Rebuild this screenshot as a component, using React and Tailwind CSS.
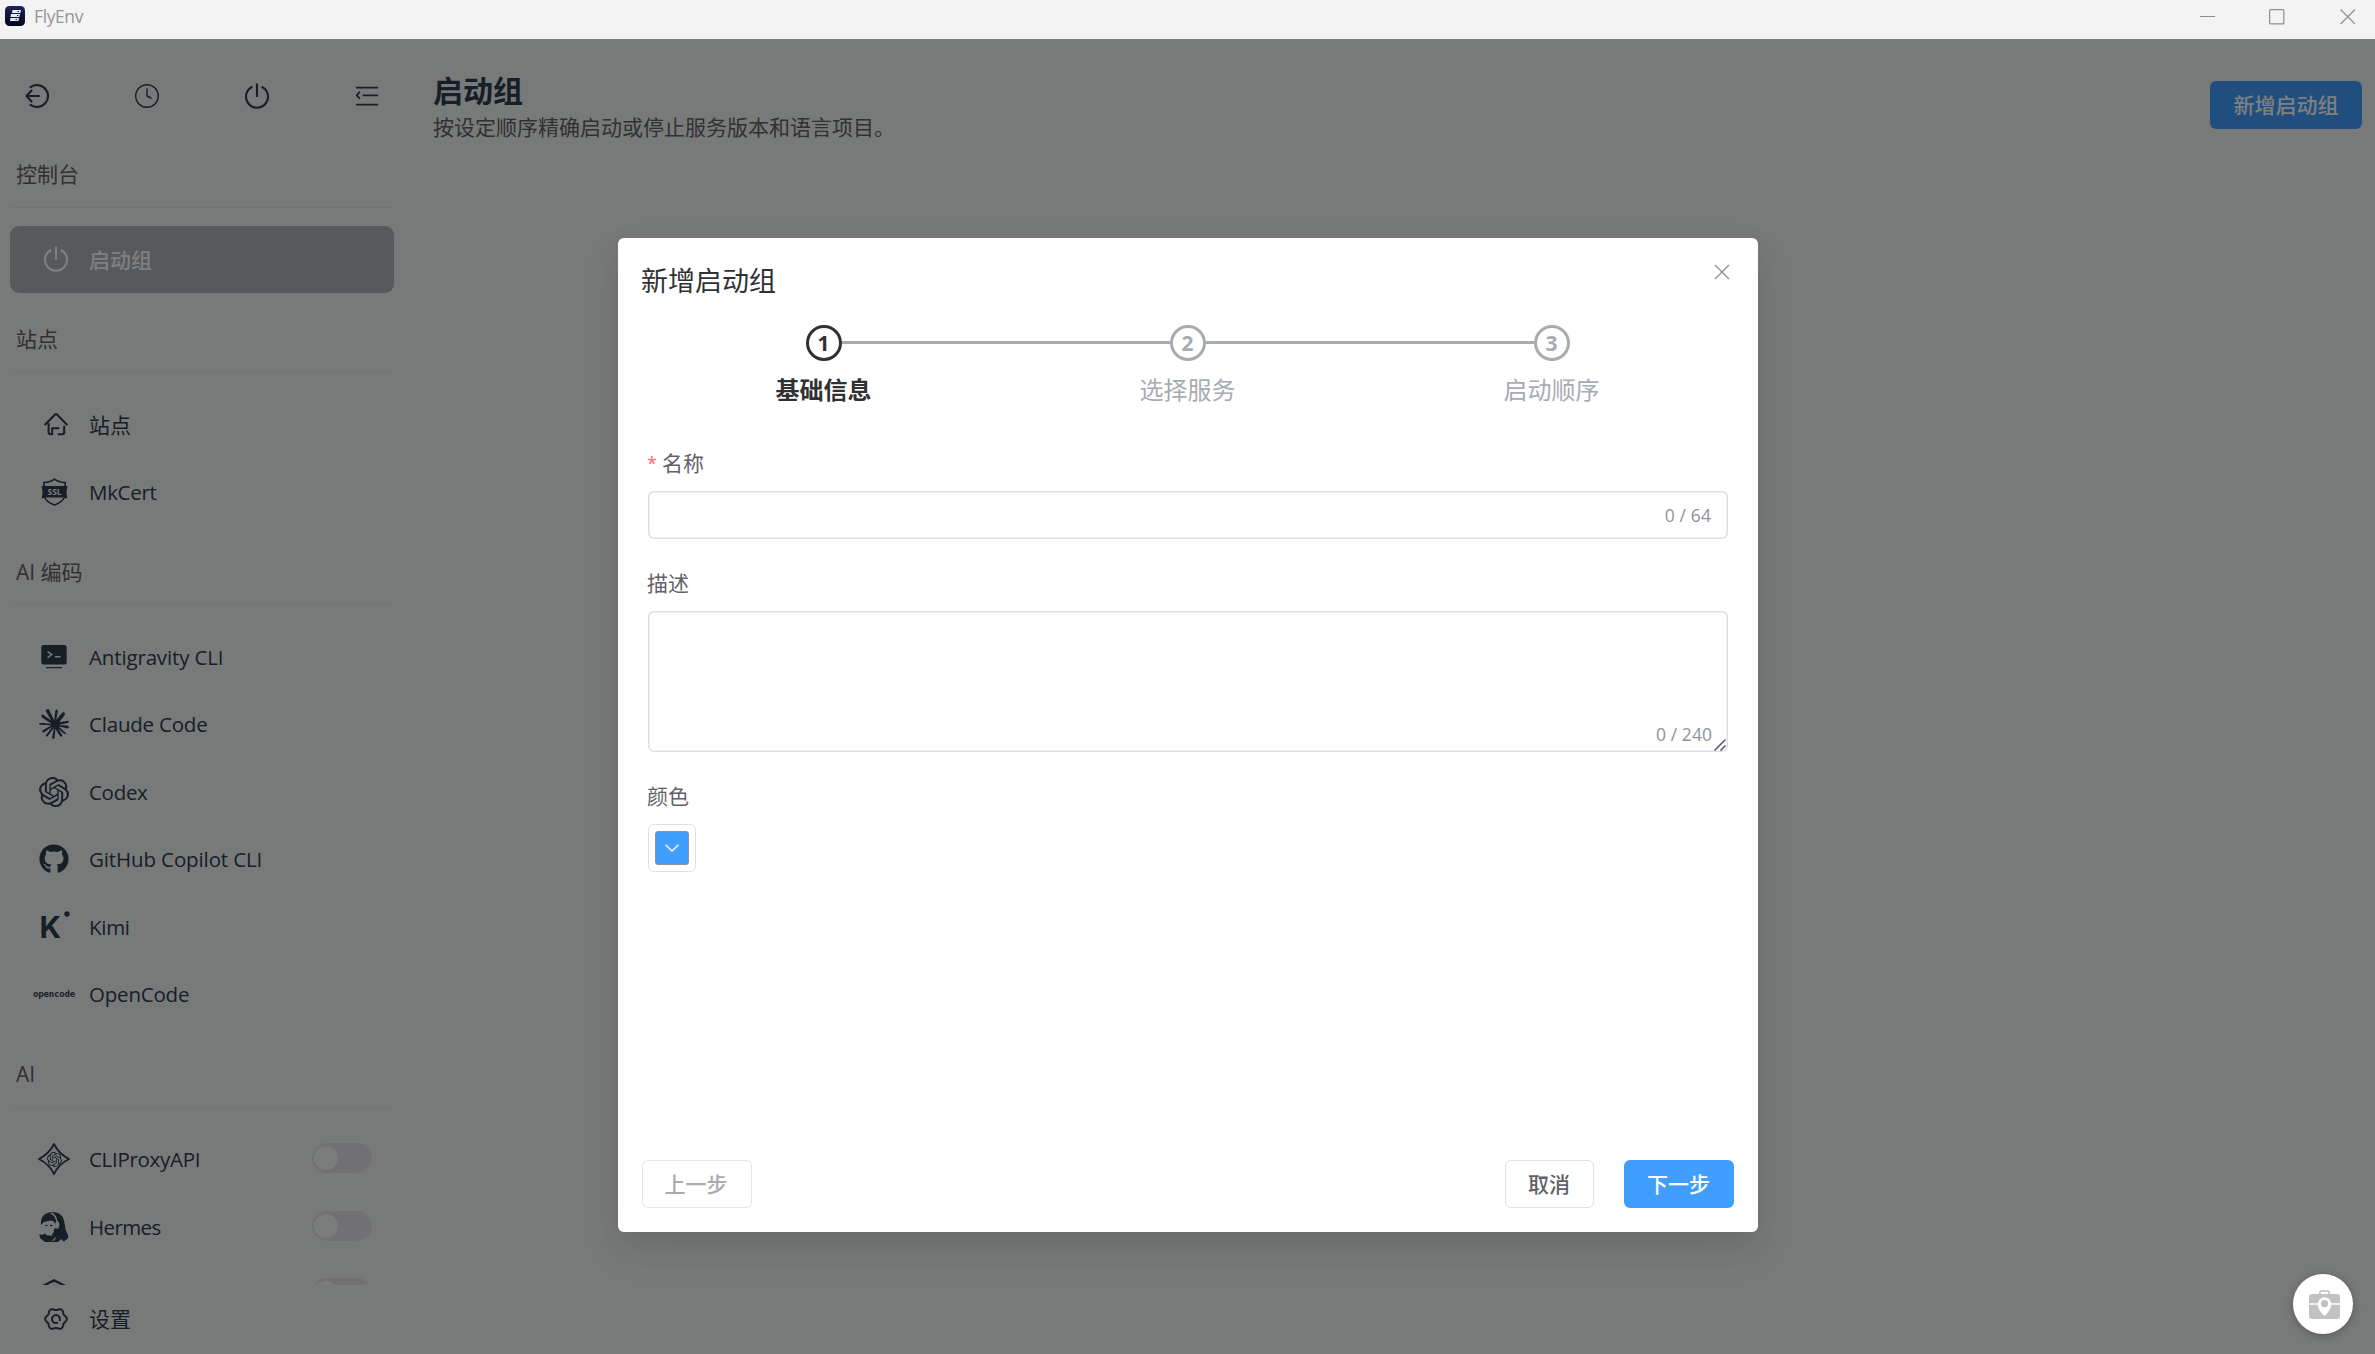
import React from "react";
import { SiClaude, SiOpenai } from "react-icons/si";
import { FaGithub } from "react-icons/fa";

const stroke = {
  fill: "none",
  stroke: "currentColor",
  strokeLinecap: "round",
  strokeLinejoin: "round",
};

function ExitIcon() {
  return (
    <svg width="24" height="24" viewBox="0 0 24 24" {...stroke} strokeWidth="2.2" className="overflow-visible">
      <path d="M5.6 3.1A11 11 0 1 1 5.6 20.9M1.4 12H14M6.6 6.6L1.4 12l5.2 5.4" />
    </svg>
  );
}

function ClockIcon() {
  return (
    <svg width="24" height="24" viewBox="0 0 24 24" {...stroke} strokeWidth="1.4">
      <circle cx="12" cy="12" r="11.3" />
      <path d="M12 5v7l4 2" />
    </svg>
  );
}

function PowerIcon() {
  return (
    <svg width="24" height="26" viewBox="0 0 24 26" {...stroke} strokeWidth="2.1">
      <path d="M16.6 3.7A11 11 0 1 1 7.4 3.7M12 .4V14" strokeLinecap="butt" />
    </svg>
  );
}

function FoldIcon() {
  return (
    <svg width="24" height="24" viewBox="0 0 24 24" {...stroke} strokeWidth="1.7">
      <path d="M1.6 3.6H22.4M8.3 11.4H22.4M1.6 20.6H22.4M4.4 8.2L1.8 11.4l2.6 3" />
    </svg>
  );
}

function HomeIcon() {
  return (
    <svg width="24" height="24" viewBox="0 0 24 24" {...stroke} strokeWidth="2.1">
      <path d="M1.2 12.4L11 2.6q1-1 2 0l9.8 9.8M4.6 12v8.2q0 2 2 2h1.6v-6H14.5M20.2 14.5v5.7q0 2-2 2H14.6" />
    </svg>
  );
}

function SslIcon() {
  return (
    <svg width="27" height="28" viewBox="0 0 27 28" fill="currentColor">
      <path
        d="M2.9 9V4.6Q9.5 4.4 13.5 1.2Q17.5 4.4 24.1 4.6V9M2.9 18Q5.5 24.4 13.5 27Q21.5 24.4 24.1 18"
        fill="none"
        stroke="currentColor"
        strokeWidth="1.6"
      />
      <path d="M.6 8h25.8l-1 6.4 1 6.4-3.6-1.2H4.2L.6 20.8l1-6.4z" />
      <text x="13.5" y="16.8" textAnchor="middle" fontSize="8.4" fontWeight="700" fill="#f0f4f2" fontFamily="Open Sans, sans-serif">
        SSL
      </text>
    </svg>
  );
}

function TerminalIcon() {
  return (
    <svg width="26" height="24" viewBox="0 0 26 24" fill="currentColor">
      <rect x="0.3" y="0" width="25.4" height="19.6" rx="2.6" />
      <path d="M6.6 6.6l4.2 3-4.2 3M14 11.7h5.6" fill="none" stroke="#f0f4f2" strokeWidth="1.4" />
      <path d="M5 22.6h16" stroke="currentColor" strokeWidth="1.2" />
    </svg>
  );
}

function KimiIcon() {
  return (
    <svg width="30" height="30" viewBox="0 0 30 30" fill="currentColor" className="mb-1 overflow-visible">
      <text x="0.6" y="28" fontSize="30" fontWeight="700" fontFamily="Inter, sans-serif">
        K
      </text>
      <circle cx="28" cy="4" r="2.7" />
    </svg>
  );
}

function OpenCodeMark() {
  return (
    <span className="whitespace-nowrap text-[9px] leading-none font-bold tracking-[-0.16px] font-['DejaVu_Sans_Mono',monospace]">
      opencode
    </span>
  );
}

function ProxyIcon() {
  return (
    <span className="relative flex size-8 items-center justify-center">
      <svg width="32" height="32" viewBox="0 0 32 32" {...stroke} strokeWidth="1.8" className="absolute inset-0">
        <path d="M16 1Q20.5 10.5 31 16Q20.5 21.5 16 31Q11.5 21.5 1 16Q11.5 10.5 16 1z" />
      </svg>
      <SiOpenai size={15} />
    </span>
  );
}

function HermesIcon() {
  return (
    <svg width="30" height="30" viewBox="0 0 30 30" fill="currentColor">
      <path d="M2 13Q1 1 13 0Q24 0 25.5 11Q26 18 29 23Q30 27 26.5 28L25 30L22.5 27L19 30H6L1 26L.4 22L3 23L6 21.5L12.5 24L13.5 18L17 16L15 9.5L12 8.6L5 10z" />
      <path d="M5.5 12L8 9.8l.6 2L10.5 9.6l.8 2.6L13.4 10l1.4 3.2V20l-2.2 3.2H7.2L5.2 19z" fill="#f0f4f2" />
      <path d="M6.2 13.6l2.4-.2M11 13.4l2.4.2" stroke="currentColor" strokeWidth="1.1" />
      <path d="M12 1Q17 3 18 10" fill="none" stroke="#f0f4f2" strokeWidth="1.4" />
      <ellipse cx="18.2" cy="13" rx="2.1" ry="3.8" fill="#f0f4f2" />
      <path d="M13 28.6l3-3 1 .4-2.6 3z" fill="#f0f4f2" />
    </svg>
  );
}

function HexIcon() {
  return (
    <svg width="30" height="30" viewBox="0 0 30 30" {...stroke} strokeWidth="2.4">
      <path d="M15 1.4L27 7.4V22L15 28L3 22V7.4zM15 6.6v3" />
    </svg>
  );
}

const gearPoints = Array.from({ length: 72 }, (_, i) => {
  const a = (i * Math.PI) / 36;
  const r = 9.9 + 0.95 * Math.cos(6 * a);
  return `${(12 + r * Math.cos(a)).toFixed(2)},${(12 + r * Math.sin(a)).toFixed(2)}`;
}).join(" ");

function GearIcon() {
  return (
    <svg width="24" height="24" viewBox="0 0 24 24" {...stroke} strokeWidth="2">
      <polygon points={gearPoints} />
      <path d="M13.2 15.9A4 4 0 1 1 15.8 13.2" />
    </svg>
  );
}

function Toggle() {
  return (
    <span className="mr-[22px] mb-0.5 flex h-[30px] w-[60px] items-center rounded-full bg-[#e2e3e9] px-0.5">
      <span className="size-6 rounded-full bg-[#f7f8f8]" />
    </span>
  );
}

function Item({ icon, label, outline, tracking = "tracking-[-0.3px]", active, toggle, cjk }) {
  return (
    <div
      className={`flex h-[67.5px] shrink-0 items-center rounded-[9px] ${
        active ? "bg-[#aeb4ba] font-medium text-white" : "text-[#2c3e50]"
      }`}
    >
      <span className={`flex w-[42px] items-center justify-center ${outline ? "mr-3 ml-[25px]" : "mr-3.5 ml-[23px]"}`}>
        {icon}
      </span>
      <span
        className={`flex-1 whitespace-nowrap leading-[30px] ${cjk ? "pt-[1px] text-[21px]" : "text-[20.5px]"} ${
          cjk ? "tracking-normal" : tracking
        }`}
      >
        {label}
      </span>
      {toggle && <Toggle />}
    </div>
  );
}

function Group({ title, children }) {
  return (
    <section className="flex shrink-0 flex-col">
      <h2 className="mb-[18px] flex h-[79.5px] items-center border-b border-[#e4e8e8] pt-3.5 pl-1.5 text-[21px] leading-[30px] text-[#606266]">
        {title}
      </h2>
      {children}
    </section>
  );
}

function Sidebar() {
  return (
    <aside className="flex w-[404px] shrink-0 flex-col px-2.5">
      <div className="flex h-[89px] items-center gap-[86px] pt-[25px] pl-[15px] text-[#2c3e50]">
        <ExitIcon />
        <ClockIcon />
        <PowerIcon />
        <FoldIcon />
      </div>
      <nav className="flex h-[1157px] flex-col overflow-hidden">
        <Group title="控制台">
          <Item active cjk outline icon={<PowerIcon />} label="启动组" />
        </Group>
        <Group title="站点">
          <Item cjk outline icon={<HomeIcon />} label="站点" />
          <Item icon={<SslIcon />} label="MkCert" />
        </Group>
        <Group title="AI 编码">
          <Item icon={<TerminalIcon />} label="Antigravity CLI" tracking="tracking-[-0.15px]" />
          <Item icon={<SiClaude size={30} />} label="Claude Code" tracking="tracking-[-0.2px]" />
          <Item icon={<SiOpenai size={30} />} label="Codex" />
          <Item icon={<FaGithub size={30} />} label="GitHub Copilot CLI" tracking="tracking-[-0.12px]" />
          <Item icon={<KimiIcon />} label="Kimi" />
          <Item icon={<OpenCodeMark />} label="OpenCode" tracking="tracking-[-0.2px]" />
        </Group>
        <Group title="AI">
          <Item toggle icon={<ProxyIcon />} label="CLIProxyAPI" />
          <Item toggle icon={<HermesIcon />} label="Hermes" tracking="tracking-[-0.6px]" />
          <Item toggle icon={<HexIcon />} label="" />
        </Group>
      </nav>
      <Item cjk outline icon={<GearIcon />} label="设置" />
    </aside>
  );
}

function TitleBar() {
  return (
    <header className="flex h-[39px] shrink-0 items-center bg-[#f3f3f3] text-[#969696]">
      <svg width="20" height="20" viewBox="0 0 20 20" className="mb-[7px] ml-[5px]">
        <defs>
          <linearGradient id="appTile" x1="0" y1="0" x2="0" y2="1">
            <stop offset="0" stopColor="#1b2558" />
            <stop offset="1" stopColor="#050818" />
          </linearGradient>
        </defs>
        <rect width="20" height="20" rx="4.5" fill="url(#appTile)" />
        <path d="M7.5 4h8.5l-.6 3H7zM6 8h9l-.6 3H5.5zM5.5 12h8.5l-.6 3H5z" fill="#e8ebf5" />
        <path d="M12.6 5.5h1.4M12 9.5h1.4M10.6 13.5H12" stroke="#101739" strokeWidth="1" />
      </svg>
      <span className="mb-[7px] ml-[9px] flex-1 text-[17.5px] leading-6 tracking-[-0.4px]">FlyEnv</span>
      <svg width="156" height="16" viewBox="0 0 156 16" fill="none" stroke="#8f8f8f" strokeWidth="1.2" className="mr-[19px] mb-1.5">
        <path d="M0 7.5H15M140.5 .5L155 15M155 .5L140.5 15" />
        <rect x="69.6" y="0.7" width="14.2" height="14.2" rx="1" />
      </svg>
    </header>
  );
}

function Step({ n, title, active, last }) {
  return (
    <div className="relative flex w-[364px] flex-col items-center">
      <span
        className={`flex size-9 items-center justify-center rounded-full border-[3px] bg-white pr-px text-[21px] leading-none font-bold ${
          active ? "border-[#303133] text-[#303133]" : "border-[#a8abb2] text-[#a8abb2]"
        }`}
      >
        {n}
      </span>
      {!last && <span className="absolute top-4 left-[200px] h-[3px] w-[328px] bg-[#a8abb2]" />}
      <span
        className={`mt-[11px] pr-px text-2xl leading-9 ${active ? "font-bold text-[#303133]" : "text-[#a8abb2]"}`}
      >
        {title}
      </span>
    </div>
  );
}

function Label({ children, required }) {
  return (
    <div className="-ml-px flex h-[33px] items-center pt-0.5 text-[21px] leading-[33px] text-[#606266]">
      {required && <span className="mr-1.5 w-[9px] text-[18px] text-[#f56c6c]">*</span>}
      {children}
    </div>
  );
}

function Dialog() {
  return (
    <div className="flex h-[994px] w-[1140px] flex-col rounded-md bg-white px-6 shadow-[0_18px_48px_6px_rgba(0,0,0,0.04),0_12px_30px_rgba(0,0,0,0.08)]">
      <div className="flex h-[87px] shrink-0 justify-between">
        <h3 className="mt-[25px] -ml-px text-[27px] leading-9 text-[#303133]">新增启动组</h3>
        <svg width="16" height="16" viewBox="0 0 16 16" stroke="#909399" strokeWidth="1.4" className="mt-[26px] mr-1">
          <path d="M1 1L15 15M15 1L1 15" />
        </svg>
      </div>
      <div className="flex">
        <Step n="1" title="基础信息" active />
        <Step n="2" title="选择服务" />
        <Step n="3" title="启动顺序" last />
      </div>
      <div className="mt-[38px] flex flex-col px-1.5">
        <Label required>名称</Label>
        <div className="mt-3 flex h-12 items-center justify-end rounded-md pr-[17px] text-[17.5px] tracking-[0.1px] text-[#909399] shadow-[inset_0_0_0_1.5px_#dcdfe6]">
          0 / 64
        </div>
        <div className="mt-[27px]">
          <Label>描述</Label>
        </div>
        <div className="relative mt-3 flex h-[141px] items-end justify-end rounded-md pr-4 pb-1 text-[17.5px] leading-[27px] tracking-[0.05px] text-[#909399] shadow-[inset_0_0_0_1.5px_#dcdfe6]">
          0 / 240
          <svg width="12" height="12" viewBox="0 0 12 12" stroke="#555" strokeWidth="1.5" className="absolute right-0.5 bottom-[1px]">
            <path d="M.5 11.5L11.5 .5M6.5 11.5L11.5 6.5" />
          </svg>
        </div>
        <div className="mt-[27px]">
          <Label>颜色</Label>
        </div>
        <div className="mt-3 flex size-12 items-center justify-center rounded-md border border-[#dcdfe6]">
          <span className="flex size-[34px] items-center justify-center rounded-[3px] border border-[#909399] bg-[#409eff]">
            <svg width="14" height="8" viewBox="0 0 14 8" fill="none" stroke="white" strokeWidth="1.4">
              <path d="M.5 .7L7 7L13.5 .7" />
            </svg>
          </span>
        </div>
      </div>
      <div className="mt-auto mb-6 flex h-12 font-medium">
        <button className="w-[110px] rounded-md border border-[#e4e7ed] pr-0.5 text-[21px] leading-none text-[#a8abb2]">上一步</button>
        <button className="ml-auto w-[89px] rounded-md border border-[#dcdfe6] pr-px text-[21px] leading-none text-[#606266]">取消</button>
        <button className="ml-[30px] w-[110px] rounded-md bg-[#409eff] pr-px text-[21px] leading-none text-white">下一步</button>
      </div>
    </div>
  );
}

function FloatingButton() {
  return (
    <div className="absolute right-[22px] bottom-5 flex size-[60px] items-center justify-center rounded-full bg-white shadow-[0_2px_10px_rgba(0,0,0,0.25)]">
      <svg width="31" height="29" viewBox="0 0 31 29" fill="#c2c2c2" className="ml-[3px] mt-[1px]">
        <path d="M10.8 5V3Q10.8 1 12.8 1H18.2Q20.2 1 20.2 3V5" fill="none" stroke="#c2c2c2" strokeWidth="1.7" />
        <path d="M3 4H28Q31 4 31 7V13.2H0V7Q0 4 3 4zM0 14.8H31V26Q31 29 28 29H3Q0 29 0 26z" />
        <path d="M15.5 7.2a6.8 6.8 0 0 1 6.8 6.8c0 4.4-3.4 9-6.8 11.8c-3.4-2.8-6.8-7.4-6.8-11.8a6.8 6.8 0 0 1 6.8-6.8z" fill="white" />
        <circle cx="15.5" cy="13.7" r="3.6" />
      </svg>
    </div>
  );
}

export default function App() {
  return (
    <div className="flex h-[1354px] w-[2375px] flex-col overflow-hidden font-['Open_Sans','Noto_Sans_CJK_SC',sans-serif]">
      <TitleBar />
      <div className="relative flex flex-1 bg-[#f0f4f2]">
        <Sidebar />
        <main className="flex flex-1 items-start justify-between pr-[13px] pl-[29px]">
          <div className="pt-[30px]">
            <h1 className="text-[30px] leading-[43px] font-bold text-[#2c3e50]">启动组</h1>
            <p className="text-[21px] leading-[30px] text-[#606266]">按设定顺序精确启动或停止服务版本和语言项目。</p>
          </div>
          <button className="mt-[42px] h-12 w-[152px] rounded-md bg-[#409eff] pt-px text-[21px] leading-none font-medium text-white">
            新增启动组
          </button>
        </main>
        <div className="absolute inset-0 flex items-start justify-center bg-black/50 pt-[199px] pl-px">
          <Dialog />
        </div>
        <FloatingButton />
      </div>
    </div>
  );
}
